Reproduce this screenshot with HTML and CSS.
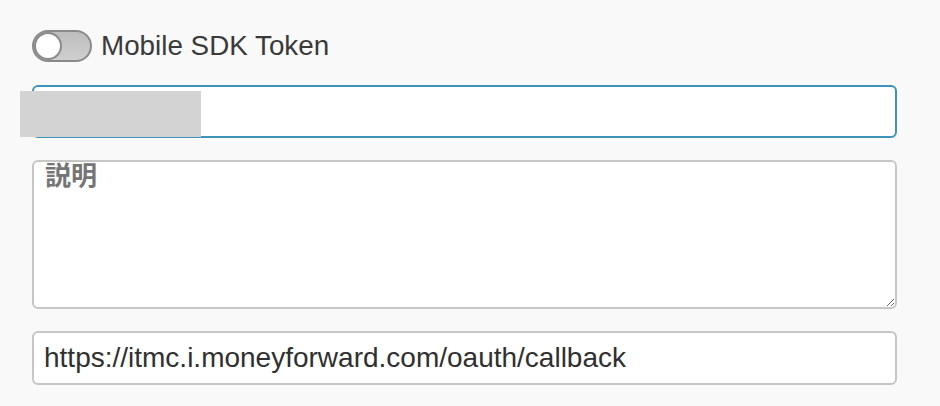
FILE: index.html
```html
<!DOCTYPE html>
<html lang="ja">
<head>
<meta charset="utf-8">
<link rel="stylesheet" href="styles.css">
</head>
<body>
<div class="form">
  <label class="toggle-row">
    <span class="switch"><span class="knob"></span></span>
    <span class="toggle-label">Mobile SDK Token</span>
  </label>
  <div class="field-wrap">
    <input class="field field-focus" type="text" value="">
    <div class="redact"></div>
  </div>
  <textarea class="area" placeholder="説明"></textarea>
  <input class="field" type="text" value="https://itmc.i.moneyforward.com/oauth/callback">
</div>
</body>
</html>
```
FILE: styles.css
```css
html, body {
  margin: 0;
  padding: 0;
  background: #f9f9f9;
}
.form {
  display: flex;
  flex-direction: column;
  gap: 22px;
  padding: 30px 0 0 32px;
  width: 865px;
  font-family: "Liberation Sans", Arial, "Noto Sans CJK JP", sans-serif;
}
.toggle-row {
  display: flex;
  align-items: center;
  gap: 9px;
  height: 32px;
  margin-bottom: 1px;
}
.switch {
  box-sizing: border-box;
  width: 60px;
  height: 32px;
  border-radius: 16px;
  border: 2px solid #8a8a8a;
  background: linear-gradient(#bdbdbd, #cfcfcf);
  display: flex;
  align-items: center;
}
.knob {
  box-sizing: border-box;
  width: 28px;
  height: 28px;
  border-radius: 50%;
  background: #fff;
  border: 2px solid #8a8a8a;
}
.toggle-label {
  font-size: 27.8px;
  color: #3a3a3a;
}
.field-wrap {
  position: relative;
}
.field {
  box-sizing: border-box;
  width: 865px;
  height: 54px;
  border: 2px solid #c6c6c6;
  border-radius: 6px;
  background: #fff;
  padding: 0 10px;
  font-family: "Liberation Sans", Arial, sans-serif;
  font-size: 28px;
  color: #303030;
  outline: none;
  display: block;
}
.field-focus {
  border-color: #3e94b8;
  height: 53px;
}
.redact {
  position: absolute;
  left: -12px;
  top: 6px;
  width: 181px;
  height: 46px;
  background: #d3d3d3;
}
.area {
  box-sizing: border-box;
  width: 865px;
  height: 149px;
  border: 2px solid #c6c6c6;
  border-radius: 6px;
  background: #fff;
  padding: 1px 11px;
  font-family: "Liberation Sans", Arial, "Noto Sans CJK JP", sans-serif;
  font-size: 26px;
  line-height: 1;
  color: #333;
  outline: none;
  display: block;
  resize: vertical;
}
.area::placeholder {
  color: #757575;
  font-weight: bold;
}
```
